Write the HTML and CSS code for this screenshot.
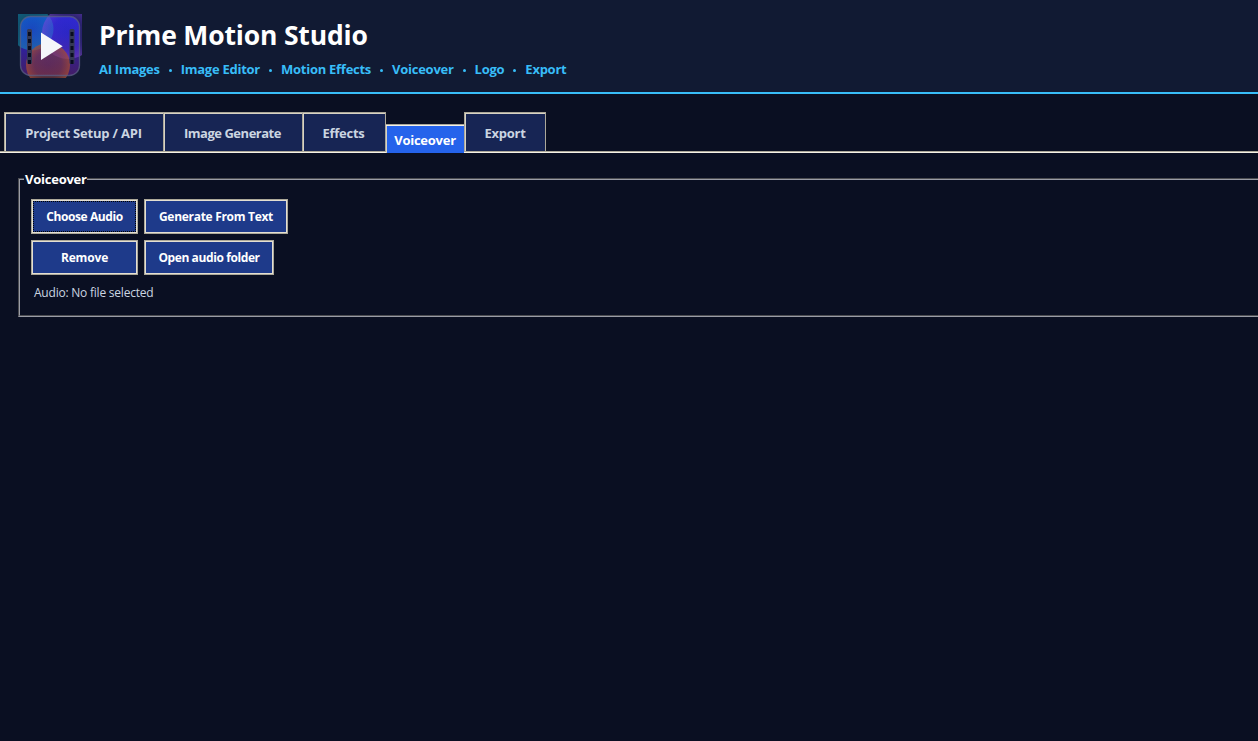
FILE: index.html
```html
<!DOCTYPE html>
<html lang="en">

<head>
  <meta charset="UTF-8">
  <title>Prime Motion Studio</title>
  <link rel="stylesheet" href="styles.css">
</head>

<body>
  <header class="header">
    <svg class="logo" width="64" height="64" viewBox="0 0 64 64">
      <defs>
        <linearGradient id="base" x1="0" y1="0" x2="0" y2="1">
          <stop offset="0" stop-color="#1824c8" />
          <stop offset="0.35" stop-color="#2423b8" />
          <stop offset="0.65" stop-color="#34208c" />
          <stop offset="1" stop-color="#431d66" />
        </linearGradient>
        <radialGradient id="cyan">
          <stop offset="0" stop-color="#0b95bd" stop-opacity="0.32" />
          <stop offset="1" stop-color="#0fa0c0" stop-opacity="0.5" />
        </radialGradient>
        <radialGradient id="violet">
          <stop offset="0" stop-color="#4a30e0" stop-opacity="0.25" />
          <stop offset="0.6" stop-color="#5a30e0" stop-opacity="0.35" />
          <stop offset="1" stop-color="#8044dc" stop-opacity="0.55" />
        </radialGradient>
        <radialGradient id="orange">
          <stop offset="0" stop-color="#80383c" stop-opacity="0.5" />
          <stop offset="0.6" stop-color="#883c38" stop-opacity="0.55" />
          <stop offset="1" stop-color="#a84c30" stop-opacity="0.75" />
        </radialGradient>
        <clipPath id="edge">
          <rect width="64" height="64" />
        </clipPath>
      </defs>
      <g clip-path="url(#edge)">
        <rect x="2.5" y="2.5" width="59" height="59" rx="10" fill="url(#base)" />
        <circle cx="14" cy="15" r="21.5" fill="url(#cyan)" />
        <circle cx="50" cy="19" r="26" fill="url(#violet)" />
        <circle cx="30" cy="51" r="22" fill="url(#orange)" />
        <rect x="2.5" y="2.5" width="59" height="59" rx="10" fill="none" stroke="#5b5f86" stroke-opacity="0.75" stroke-width="1.3" />
        <g fill="#343955">
          <rect x="9" y="15" width="5" height="35" rx="1.5" />
          <rect x="51.5" y="15" width="5" height="35" rx="1.5" />
        </g>
        <g stroke="#080c20" stroke-width="3" stroke-dasharray="4 3">
          <path d="M11.500 18V50" />
          <path d="M54 18V50" />
        </g>
        <path d="M23 18.500V46L44.700 32.300Z" fill="#f5f6fa" />
      </g>
    </svg>
    <div class="header-text">
      <h1>Prime Motion Studio</h1>
      <div class="features">
        <span>AI Images</span><i class="dot"></i>
        <span>Image Editor</span><i class="dot"></i>
        <span>Motion Effects</span><i class="dot"></i>
        <span>Voiceover</span><i class="dot"></i>
        <span>Logo</span><i class="dot"></i>
        <span>Export</span>
      </div>
    </div>
  </header>

  <nav class="tabs">
    <button class="tab tab-setup">Project Setup / API</button>
    <button class="tab tab-image">Image Generate</button>
    <button class="tab tab-effects">Effects</button>
    <button class="tab active">Voiceover</button>
    <button class="tab tab-export">Export</button>
  </nav>

  <main>
    <fieldset class="group">
      <legend>Voiceover</legend>
      <div class="actions">
        <button class="btn focused">Choose Audio</button>
        <button class="btn btn-generate">Generate From Text</button>
        <button class="btn btn-remove">Remove</button>
        <button class="btn btn-folder">Open audio folder</button>
      </div>
      <p class="audio-label">Audio: No file selected</p>
    </fieldset>
  </main>
</body>

</html>
```
FILE: styles.css
```css
* {
  box-sizing: border-box;
}

body {
  margin: 0;
  height: 741px;
  overflow: hidden;
  background: #0a0f22;
  color: #fff;
  font-family: "Open Sans", "Noto Sans", sans-serif;
  font-size: 13px;
}

/* --- Header --- */
.header {
  display: flex;
  height: 94px;
  padding: 14px 18px 0;
  background: #111a33;
  border-bottom: 2px solid #38bdf8;
}

.header-text {
  padding-left: 17px;
}

h1 {
  margin: 3px 0 0;
  font-size: 26.5px;
  line-height: 36px;
  font-weight: 700;
  letter-spacing: -0.16px;
  white-space: nowrap;
}

.features {
  display: flex;
  margin-top: 7px;
  color: #38bdf8;
  font-weight: 700;
  line-height: 18px;
  letter-spacing: -0.26px;
  white-space: nowrap;
}

.dot {
  width: 3px;
  height: 3px;
  margin: 9px 9px 0;
  border-radius: 50%;
  background: #38bdf8;
}

/* --- Tabs --- */
.tabs {
  display: flex;
  align-items: flex-end;
  height: 59px;
  padding-left: 4px;
  background: linear-gradient(#aca899 1px, #f5f1e6 1px) bottom / 100% 2px no-repeat;
}

button {
  margin: 0;
  padding: 0;
  font-family: inherit;
  font-weight: 700;
  white-space: nowrap;
}

.tab {
  height: 39px;
  margin-bottom: 2px;
  padding-top: 2px;
  color: #cbd5e1;
  background: #172554;
  border: solid #aca899;
  border-width: 1px 0 0 1px;
  box-shadow: inset 1px 1px #d8d3c4;
  font-size: 13px;
  letter-spacing: -0.25px;
}

.tab-setup {
  width: 159px;
  padding-right: 1px;
  letter-spacing: -0.2px;
}

.tab-image {
  width: 139px;
  padding-right: 1px;
  letter-spacing: -0.48px;
}

.tab-effects {
  width: 84px;
  padding-right: 1px;
  border-right-width: 1px;
}

.tab-export {
  width: 82px;
  border-right-width: 1px;
}

.tab.active {
  width: 78px;
  height: 29px;
  margin-bottom: 0;
  color: #fff;
  background: #2563eb;
  border-left: 0;
  box-shadow: inset 0 1px #f5f1e6, inset 1px 0 #d8d3c4;
}

/* --- Voiceover panel --- */
main {
  padding: 17px 0 0 18px;
}

.group {
  min-width: 0;
  height: 147px;
  margin: 0 -4px 0 0;
  padding: 11px 11px 0;
  border: 2px groove #9a9ca6;
}

legend {
  margin-left: -7px;
  padding: 0 0 0 1px;
  font-weight: 700;
  line-height: 18px;
  letter-spacing: -0.24px;
}

.actions {
  display: grid;
  grid-template-columns: 107px 144px;
  gap: 6px;
}

.btn {
  height: 35px;
  color: #fff;
  background: #1e3a8a;
  border: 1px solid #aca899;
  box-shadow: inset 0 0 0 1px #e4dfd2;
  font-size: 12px;
  letter-spacing: -0.4px;
}

.btn-generate {
  letter-spacing: -0.3px;
}

.btn-remove {
  letter-spacing: -0.15px;
}

.btn-folder {
  width: 130px;
}

.focused {
  outline: 1px dotted #000;
  outline-offset: -3px;
}

.audio-label {
  margin: 9px 0 0 3px;
  color: #cbd5e1;
  font-size: 12px;
  line-height: 18px;
  letter-spacing: -0.22px;
}
```
